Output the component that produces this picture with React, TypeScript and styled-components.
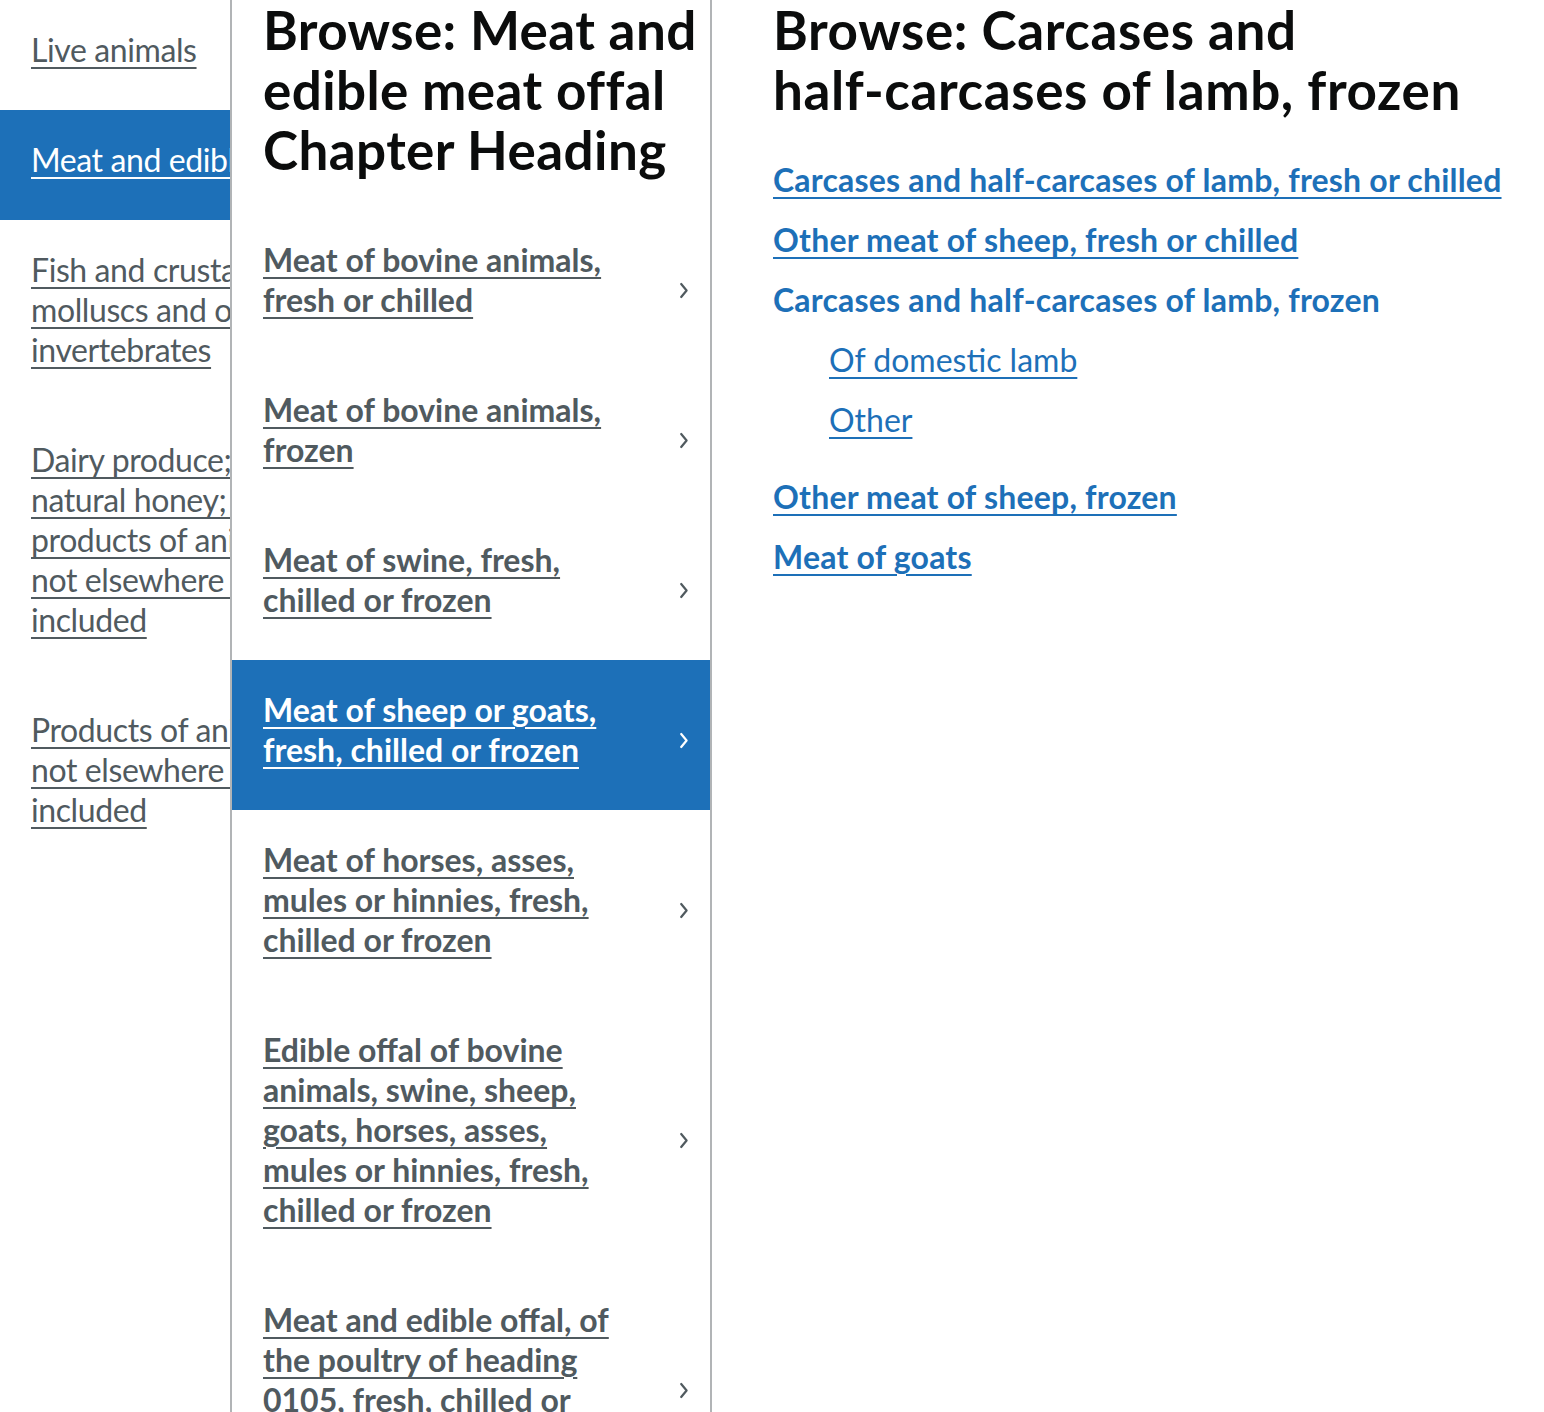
import React from "react";
import styled, { createGlobalStyle } from "styled-components";

const Global = createGlobalStyle`
  html, body { margin: 0; padding: 0; background: #ffffff; }
  body {
    font-family: Lato, "Liberation Sans", Arial, sans-serif;
    color: #0b0c0c;
    -webkit-font-smoothing: antialiased;
  }
`;

const Browser = styled.div`
  display: flex;
  height: 100vh;
  overflow: hidden;
`;

const SideColumn = styled.nav`
  flex: none;
  width: 232px;
  box-sizing: border-box;
  border-right: 2px solid #b1b4b6;
  overflow: hidden;
`;

const SideList = styled.ul`
  list-style: none;
  margin: 0;
  padding: 0;
  width: 460px;
`;

const SideItem = styled.li<{ $active?: boolean }>`
  padding: 30px 0 40px 31px;
  background: ${(p) => (p.$active ? "#1d70b8" : "transparent")};
`;

const SideLink = styled.a<{ $active?: boolean }>`
  display: block;
  width: 385px;
  font-size: 32px;
  line-height: 40px;
  letter-spacing: -0.4px;
  font-weight: 400;
  color: ${(p) => (p.$active ? "#ffffff" : "#505a5f")};
  text-decoration: underline;
  text-decoration-thickness: 2px;
  text-underline-offset: 5px;
  cursor: pointer;
`;

const MiddleColumn = styled.section`
  flex: none;
  width: 480px;
  box-sizing: border-box;
  border-right: 2px solid #b1b4b6;
`;

const Heading = styled.h1`
  margin: 0 0 30px;
  padding: 0 10px 0 31px;
  font-size: 53px;
  letter-spacing: 0.4px;
  line-height: 60px;
  font-weight: 700;
  color: #0b0c0c;
`;

const ItemList = styled.ul`
  list-style: none;
  margin: 0;
  padding: 0;
`;

const ItemRow = styled.li<{ $active?: boolean }>`
  display: flex;
  align-items: center;
  padding: 30px 21px 40px 31px;
  background: ${(p) => (p.$active ? "#1d70b8" : "transparent")};
  color: ${(p) => (p.$active ? "#ffffff" : "#505a5f")};
`;

const ItemLink = styled.a`
  flex: 0 1 360px;
  font-size: 32px;
  line-height: 40px;
  font-weight: 700;
  color: inherit;
  text-decoration: underline;
  text-decoration-thickness: 2px;
  text-underline-offset: 5px;
  cursor: pointer;
`;

const ChevronBox = styled.span`
  margin-left: auto;
  margin-top: 20px;
  display: flex;
  color: inherit;
`;

const RightColumn = styled.main`
  flex: 1;
  padding: 0 30px 0 61px;
  min-width: 0;
`;

const RightHeading = styled.h1`
  margin: 0 0 40px;
  font-size: 53px;
  letter-spacing: 0.6px;
  line-height: 60px;
  font-weight: 700;
  color: #0b0c0c;
`;

const NoBreak = styled.span`
  white-space: nowrap;
`;

const LinkList = styled.ul<{ $nested?: boolean }>`
  list-style: none;
  margin: ${(p) => (p.$nested ? "20px 0 37px" : "0")};
  padding: ${(p) => (p.$nested ? "0 0 0 56px" : "0")};
`;

const LinkItem = styled.li`
  margin-bottom: 20px;
`;

const ResultLink = styled.a<{ $weight: number }>`
  font-size: 32px;
  line-height: 40px;
  letter-spacing: ${(p) => (p.$weight === 700 ? "0.2px" : "0")};
  font-weight: ${(p) => p.$weight};
  color: #1d70b8;
  text-decoration: underline;
  text-decoration-thickness: 2px;
  text-underline-offset: 5px;
  cursor: pointer;
`;

const Current = styled.span`
  display: block;
  font-size: 32px;
  line-height: 40px;
  letter-spacing: 0.2px;
  font-weight: 700;
  color: #1d70b8;
`;

const Chevron = () => (
  <ChevronBox>
    <svg width="10" height="17" viewBox="0 0 10 17" fill="none">
      <path d="M2.2 2 L7.6 8.5 L2.2 15" stroke="currentColor" strokeWidth="2.2" strokeLinecap="round" strokeLinejoin="round" />
    </svg>
  </ChevronBox>
);

const sections = [
  { label: "Live animals" },
  { label: "Meat and edible meat offal", active: true },
  { label: "Fish and crustaceans, molluscs and other aquatic invertebrates" },
  { label: "Dairy produce; birds' eggs; natural honey; edible products of animal origin, not elsewhere specified or included" },
  { label: "Products of animal origin, not elsewhere specified or included" },
];

const headings = [
  { label: "Meat of bovine animals, fresh or chilled" },
  { label: "Meat of bovine animals, frozen" },
  { label: "Meat of swine, fresh, chilled or frozen" },
  { label: "Meat of sheep or goats, fresh, chilled or frozen", active: true },
  { label: "Meat of horses, asses, mules or hinnies, fresh, chilled or frozen" },
  { label: "Edible offal of bovine animals, swine, sheep, goats, horses, asses, mules or hinnies, fresh, chilled or frozen" },
  { label: "Meat and edible offal, of the poultry of heading 0105, fresh, chilled or frozen" },
];

export default function App() {
  return (
    <>
      <Global />
      <Browser>
        <SideColumn>
          <SideList>
            {sections.map((s) => (
              <SideItem key={s.label} $active={s.active}>
                <SideLink $active={s.active}>{s.label}</SideLink>
              </SideItem>
            ))}
          </SideList>
        </SideColumn>
        <MiddleColumn>
          <Heading>Browse: Meat and edible meat offal Chapter Heading</Heading>
          <ItemList>
            {headings.map((h) => (
              <ItemRow key={h.label} $active={h.active}>
                <ItemLink>{h.label}</ItemLink>
                <Chevron />
              </ItemRow>
            ))}
          </ItemList>
        </MiddleColumn>
        <RightColumn>
          <RightHeading>
            Browse: Carcases and <NoBreak>half-carcases</NoBreak> of lamb, frozen
          </RightHeading>
          <LinkList>
            <LinkItem>
              <ResultLink $weight={700}>Carcases and half-carcases of lamb, fresh or chilled</ResultLink>
            </LinkItem>
            <LinkItem>
              <ResultLink $weight={700}>Other meat of sheep, fresh or chilled</ResultLink>
            </LinkItem>
            <LinkItem>
              <Current>Carcases and half-carcases of lamb, frozen</Current>
              <LinkList $nested>
                <LinkItem>
                  <ResultLink $weight={400}>Of domestic lamb</ResultLink>
                </LinkItem>
                <LinkItem>
                  <ResultLink $weight={400}>Other</ResultLink>
                </LinkItem>
              </LinkList>
            </LinkItem>
            <LinkItem>
              <ResultLink $weight={700}>Other meat of sheep, frozen</ResultLink>
            </LinkItem>
            <LinkItem>
              <ResultLink $weight={700}>Meat of goats</ResultLink>
            </LinkItem>
          </LinkList>
        </RightColumn>
      </Browser>
    </>
  );
}
